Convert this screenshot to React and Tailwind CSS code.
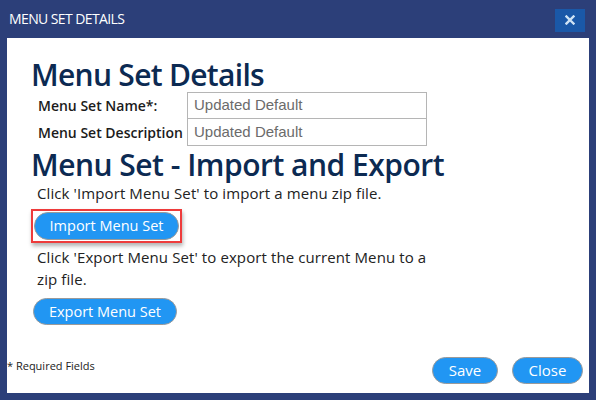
import React from "react";

const seg = { fontFamily: '"Open Sans", "Noto Sans", sans-serif' };
const arial = { fontFamily: '"Liberation Sans", Arial, sans-serif' };

export default function App() {
  return (
    <div className="w-[596px] h-[400px] bg-[#2c3f79] flex flex-col overflow-hidden" style={seg}>
      <div className="h-[38px] flex items-center justify-between pl-[9px] pr-[11px]">
        <span className="text-white text-[14px] tracking-[-0.6px] leading-none mt-[-1px]">MENU SET DETAILS</span>
        <button className="w-[30px] h-[23px] bg-[#1a58a8] flex items-center justify-center mt-[2px]">
          <svg width="10" height="10" viewBox="0 0 10 10">
            <path d="M1.5 1.5 L8.5 8.5 M8.5 1.5 L1.5 8.5" stroke="#cfe3f5" strokeWidth="2.4" strokeLinecap="square" />
          </svg>
        </button>
      </div>
      <div className="mx-[7px] mb-[7px] flex-1 bg-white flex flex-col">
        <div className="pl-[26px] pt-[22px] flex flex-col">
          <h1 className="ml-[-2px] text-[30px] leading-[30px] font-semibold text-[#0c2a52] tracking-[-0.7px] mb-[2px]">Menu Set Details</h1>
          <div className="flex flex-col">
            <div className="flex items-center h-[27px]">
              <span className="w-[154px] pl-[5px] text-[14px] font-semibold text-[#1b1b1b] whitespace-nowrap">Menu Set Name*:</span>
              <div className="w-[240px] h-[27px] border border-[#b5b5b5] flex items-center pl-[6px] text-[15px] text-[#6b6b6b]" style={arial}>Updated Default</div>
            </div>
            <div className="flex items-center h-[27px]">
              <span className="w-[154px] pl-[5px] text-[14px] font-semibold text-[#1b1b1b] whitespace-nowrap overflow-hidden">Menu Set Description</span>
              <div className="w-[240px] h-[27px] border border-t-0 border-[#b5b5b5] flex items-center pl-[6px] text-[15px] text-[#6b6b6b]" style={arial}>Updated Default</div>
            </div>
          </div>
          <h2 className="ml-[-2px] text-[30px] leading-[30px] font-semibold text-[#0c2a52] tracking-[-0.5px] mt-[4px] mb-[4px]">Menu Set - Import and Export</h2>
          <p className="pl-[4px] text-[15px] leading-[18px] text-[#222] tracking-[0.1px]">Click 'Import Menu Set' to import a menu zip file.</p>
          <div className="mt-[7px] ml-[-2px] self-start border-2 border-[#ee3b3b] p-[1px] shadow-[1px_3px_4px_rgba(0,0,0,0.3)]">
            <button className="w-[145px] h-[28px] block rounded-full bg-[#2196f3] border border-[#9a9a9a] text-white text-[14.5px]">Import Menu Set</button>
          </div>
          <p className="pl-[4px] mt-[3px] text-[15px] leading-[22px] text-[#222] tracking-[0.1px] w-[400px]">Click 'Export Menu Set' to export the current Menu to a zip file.</p>
          <div className="mt-[8px]">
            <button className="w-[144px] h-[27px] rounded-full bg-[#2196f3] border border-[#9a9a9a] text-white text-[14.5px]">Export Menu Set</button>
          </div>
        </div>
        <div className="mt-auto flex items-end justify-between pb-[9px] pr-[6px]">
          <span className="text-[11px] text-[#222] mb-[10px]">* Required Fields</span>
          <div className="flex gap-[14px]">
            <button className="w-[66px] h-[27px] rounded-full bg-[#2196f3] border border-[#9a9a9a] text-white text-[15px]">Save</button>
            <button className="w-[71px] h-[27px] rounded-full bg-[#2196f3] border border-[#9a9a9a] text-white text-[15px]">Close</button>
          </div>
        </div>
      </div>
    </div>
  );
}
